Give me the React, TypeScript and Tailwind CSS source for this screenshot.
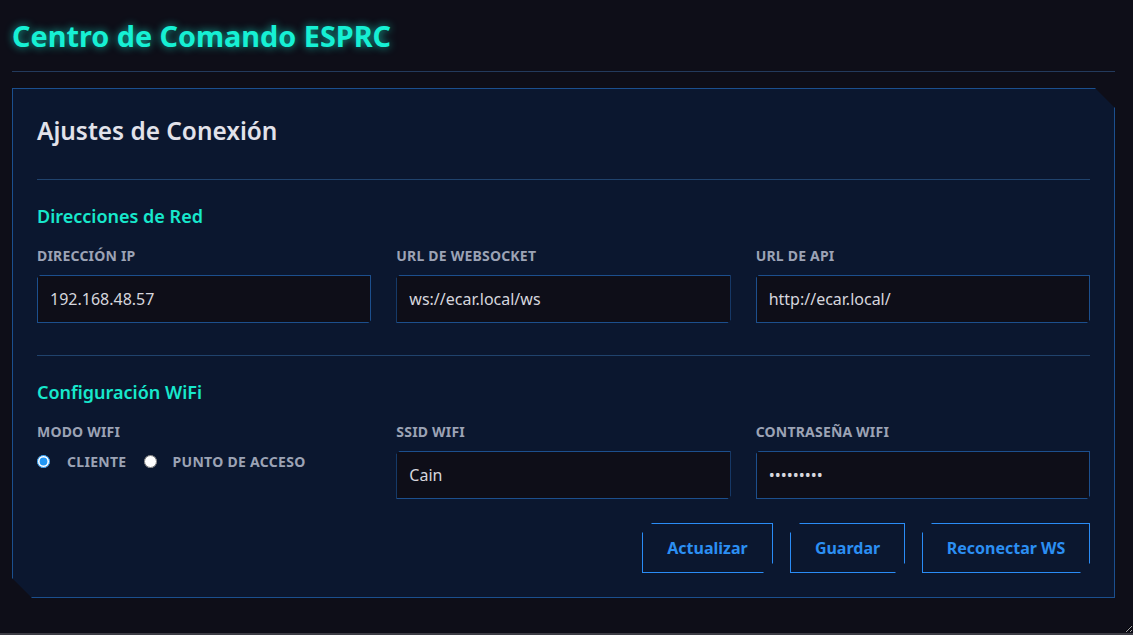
import React from 'react';

const cardClip =
  '[clip-path:polygon(0_0,calc(100%-20px)_0,100%_20px,100%_100%,20px_100%,0_calc(100%-20px))]';
const btnClip =
  '[clip-path:polygon(10px_0,100%_0,100%_calc(100%-10px),calc(100%-10px)_100%,0_100%,0_10px)]';
const inputClip =
  '[clip-path:polygon(3px_0,100%_0,100%_calc(100%-3px),calc(100%-3px)_100%,0_100%,0_3px)]';

const Field = ({ label, value, type = 'text' }: { label: string; value: string; type?: string }) => (
  <div className="flex flex-col">
    <label className="text-[14px] font-bold uppercase tracking-[0.2px] text-[#9ca3b5] leading-[18px] mb-[10px]">
      {label}
    </label>
    <input
      type={type}
      defaultValue={value}
      className={`h-[48px] w-full bg-[#0e0e18] border border-[#1c4f8d] px-[12px] text-[16px] text-[#d6d6de] outline-none ${inputClip}`}
    />
  </div>
);

const Button = ({ children, w }: { children: React.ReactNode; w: string }) => (
  <button
    className={`h-[50px] ${w} border border-[#2a8cf6] text-[16px] font-bold text-[#2b8ff3] bg-transparent ${btnClip}`}
  >
    {children}
  </button>
);

const App = () => {
  return (
    <div
      className="h-[635px] w-full bg-[#0e0e18] border-b-2 border-[#3c3c44] resize overflow-auto pl-[12px] pr-[18px]"
      style={{ fontFamily: '"Noto Sans", "Open Sans", sans-serif' }}
    >
      {/* Header */}
      <h1 className="pt-[17px] h-[71px] text-[28.8px] font-bold text-[#16f0d4] [text-shadow:0_0_8px_rgba(22,240,212,0.7)] leading-[38px]">
        Centro de Comando ESPRC
      </h1>
      <div className="h-px bg-[#233a5c]" />

      {/* Card */}
      <section
        className={`mt-[16px] bg-[#0b172f] border border-[#1b4f8e] px-[24px] pt-[24px] pb-[24px] ${cardClip}`}
      >
        <h2 className="text-[24.4px] font-semibold text-[#e2e2ea] leading-[36px]">Ajustes de Conexión</h2>
        <div className="mt-[30px] h-px bg-[#20436d]" />

        <h3 className="mt-[23px] text-[18px] font-semibold text-[#17e8cc] leading-[26px]">Direcciones de Red</h3>
        <div className="mt-[18px] grid grid-cols-3 gap-[25px]">
          <Field label="Dirección IP" value="192.168.48.57" />
          <Field label="URL de WebSocket" value="ws://ecar.local/ws" />
          <Field label="URL de API" value="http://ecar.local/" />
        </div>

        <div className="mt-[32px] h-px bg-[#20436d]" />

        <h3 className="mt-[23px] text-[18px] font-semibold text-[#17e8cc] leading-[26px]">Configuración WiFi</h3>
        <div className="mt-[18px] grid grid-cols-3 gap-[25px]">
          <div className="flex flex-col">
            <span className="text-[14px] font-bold uppercase tracking-[0.2px] text-[#9ca3b5] leading-[18px] mb-[11px]">
              Modo WiFi
            </span>
            <div className="flex items-center h-[18px] text-[14px] font-bold uppercase tracking-[0.3px] text-[#9ca3b5]">
              <label className="flex items-center">
                <input type="radio" name="mode" defaultChecked className="m-0 w-[13px] h-[13px] accent-[#2196f3]" />
                <span className="ml-[17px]">Cliente</span>
              </label>
              <label className="flex items-center ml-[17px]">
                <input type="radio" name="mode" className="m-0 w-[13px] h-[13px]" />
                <span className="ml-[16px]">Punto de acceso</span>
              </label>
            </div>
          </div>
          <Field label="SSID WiFi" value="Cain" />
          <Field label="Contraseña WiFi" value="abcdefghi" type="password" />
        </div>

        <div className="mt-[24px] flex justify-end gap-[17px]">
          <Button w="w-[131px]">Actualizar</Button>
          <Button w="w-[115px]">Guardar</Button>
          <Button w="w-[168px]">Reconectar WS</Button>
        </div>
      </section>
    </div>
  );
};

export default App;
